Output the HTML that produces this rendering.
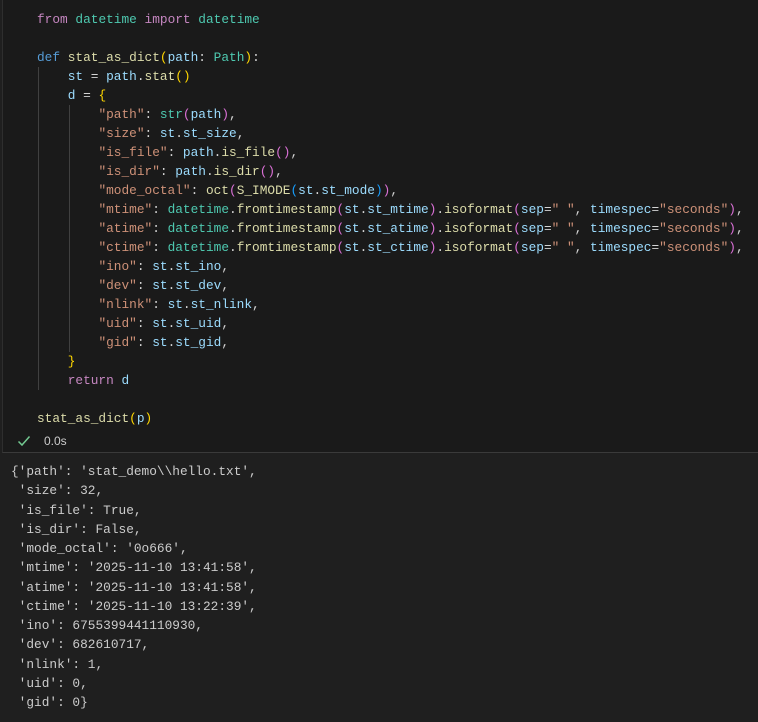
<!DOCTYPE html>
<html><head><meta charset="utf-8"><style>
html,body{margin:0;padding:0;background:#1f1f1f;width:758px;height:722px;overflow:hidden}
.cell{position:absolute;left:2px;top:0;width:756px;height:452px;background:#1a1a1a;border-left:1px solid #2e2e2e;border-bottom:1px solid #3a3a3a}
pre{margin:0;font-family:"Liberation Mono",monospace;font-size:12.8px;white-space:pre}
.code{position:absolute;left:37px;top:9.5px;line-height:19px;color:#d4d4d4}
.out{position:absolute;left:11px;top:462px;line-height:19.25px;color:#cccccc}
.g{position:absolute;width:1px;background:#404040}
.k{color:#c586c0}.d{color:#569cd6}.f{color:#dcdcaa}.v{color:#9cdcfe}.c{color:#4ec9b0}.s{color:#ce9178}
.y{color:#ffd700}.p{color:#da70d6}.b{color:#179fff}
.st{position:absolute;left:18px;top:434px;font-family:"Liberation Sans",sans-serif;font-size:12px;color:#cccccc}
</style></head><body>
<div class="cell"></div>
<div class="g" style="left:38px;top:67px;height:323px"></div>
<div class="g" style="left:69px;top:105px;height:247px"></div>
<pre class="code"><span class="k">from</span> <span class="c">datetime</span> <span class="k">import</span> <span class="c">datetime</span>

<span class="d">def</span> <span class="f">stat_as_dict</span><span class="y">(</span><span class="v">path</span>: <span class="c">Path</span><span class="y">)</span>:
    <span class="v">st</span> = <span class="v">path</span>.<span class="f">stat</span><span class="y">()</span>
    <span class="v">d</span> = <span class="y">{</span>
        <span class="s">"path"</span>: <span class="c">str</span><span class="p">(</span><span class="v">path</span><span class="p">)</span>,
        <span class="s">"size"</span>: <span class="v">st</span>.<span class="v">st_size</span>,
        <span class="s">"is_file"</span>: <span class="v">path</span>.<span class="f">is_file</span><span class="p">()</span>,
        <span class="s">"is_dir"</span>: <span class="v">path</span>.<span class="f">is_dir</span><span class="p">()</span>,
        <span class="s">"mode_octal"</span>: <span class="f">oct</span><span class="p">(</span><span class="f">S_IMODE</span><span class="b">(</span><span class="v">st</span>.<span class="v">st_mode</span><span class="b">)</span><span class="p">)</span>,
        <span class="s">"mtime"</span>: <span class="c">datetime</span>.<span class="f">fromtimestamp</span><span class="p">(</span><span class="v">st</span>.<span class="v">st_mtime</span><span class="p">)</span>.<span class="f">isoformat</span><span class="p">(</span><span class="v">sep</span>=<span class="s">" "</span>, <span class="v">timespec</span>=<span class="s">"seconds"</span><span class="p">)</span>,
        <span class="s">"atime"</span>: <span class="c">datetime</span>.<span class="f">fromtimestamp</span><span class="p">(</span><span class="v">st</span>.<span class="v">st_atime</span><span class="p">)</span>.<span class="f">isoformat</span><span class="p">(</span><span class="v">sep</span>=<span class="s">" "</span>, <span class="v">timespec</span>=<span class="s">"seconds"</span><span class="p">)</span>,
        <span class="s">"ctime"</span>: <span class="c">datetime</span>.<span class="f">fromtimestamp</span><span class="p">(</span><span class="v">st</span>.<span class="v">st_ctime</span><span class="p">)</span>.<span class="f">isoformat</span><span class="p">(</span><span class="v">sep</span>=<span class="s">" "</span>, <span class="v">timespec</span>=<span class="s">"seconds"</span><span class="p">)</span>,
        <span class="s">"ino"</span>: <span class="v">st</span>.<span class="v">st_ino</span>,
        <span class="s">"dev"</span>: <span class="v">st</span>.<span class="v">st_dev</span>,
        <span class="s">"nlink"</span>: <span class="v">st</span>.<span class="v">st_nlink</span>,
        <span class="s">"uid"</span>: <span class="v">st</span>.<span class="v">st_uid</span>,
        <span class="s">"gid"</span>: <span class="v">st</span>.<span class="v">st_gid</span>,
    <span class="y">}</span>
    <span class="k">return</span> <span class="v">d</span>

<span class="f">stat_as_dict</span><span class="y">(</span><span class="v">p</span><span class="y">)</span></pre>
<svg style="position:absolute;left:17px;top:435px" width="14" height="12" viewBox="0 0 14 12"><path d="M1.5 6.5 L5 10 L12.5 1.5" fill="none" stroke="#73c991" stroke-width="1.5"/></svg>
<div class="st" style="left:44px">0.0s</div>
<pre class="out">{'path': 'stat_demo\\hello.txt',
 'size': 32,
 'is_file': True,
 'is_dir': False,
 'mode_octal': '0o666',
 'mtime': '2025-11-10 13:41:58',
 'atime': '2025-11-10 13:41:58',
 'ctime': '2025-11-10 13:22:39',
 'ino': 6755399441110930,
 'dev': 682610717,
 'nlink': 1,
 'uid': 0,
 'gid': 0}</pre>
</body></html>
